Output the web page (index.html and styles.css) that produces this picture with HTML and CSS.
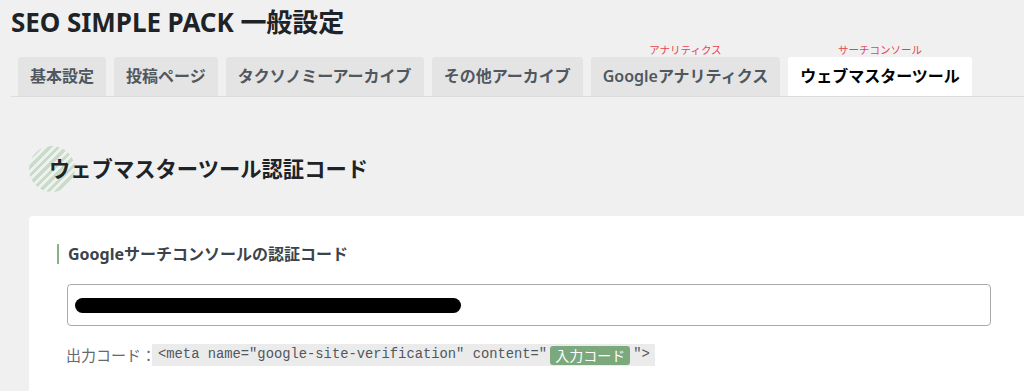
FILE: index.html
```html
<!DOCTYPE html>
<html lang="ja">
<head>
<meta charset="utf-8">
<title>SEO SIMPLE PACK 一般設定</title>
<link rel="stylesheet" href="styles.css">
</head>
<body>
<div class="wrap">
  <h1 class="page-title">SEO SIMPLE PACK 一般設定</h1>
  <nav class="tabs">
    <a class="tab">基本設定</a>
    <a class="tab">投稿ページ</a>
    <a class="tab">タクソノミーアーカイブ</a>
    <a class="tab">その他アーカイブ</a>
    <a class="tab">Googleアナリティクス<span class="tab-note">アナリティクス</span></a>
    <a class="tab tab-active">ウェブマスターツール<span class="tab-note">サーチコンソール</span></a>
  </nav>
  <section class="section">
    <h2 class="section-title">ウェブマスターツール認証コード</h2>
    <div class="card">
      <h3 class="field-label">Googleサーチコンソールの認証コード</h3>
      <div class="field-input"><span class="redact"></span></div>
      <p class="output">出力コード：<code class="code">&lt;meta name="google-site-verification" content="<span class="badge">入力コード</span>"&gt;</code></p>
    </div>
  </section>
</div>
</body>
</html>
```

FILE: styles.css
```css
html, body {
  margin: 0;
  padding: 0;
  background: #f0f0f1;
  overflow: hidden;
}
body {
  font-family: "Noto Sans", "Noto Sans CJK JP", sans-serif;
  color: #1d2327;
}
.wrap {
  padding-left: 11px;
}
.page-title {
  margin: 0;
  padding-top: 4px;
  font-size: 26px;
  line-height: 36px;
  font-weight: 700;
  color: #1d2327;
  letter-spacing: -0.05px;
}
.tabs {
  display: flex;
  gap: 8px;
  margin-top: 17px;
  padding-left: 7px;
  border-bottom: 1px solid #dcdcde;
}
.tab {
  position: relative;
  display: block;
  height: 39px;
  line-height: 39px;
  padding: 0 12px;
  background: #e4e4e4;
  border-radius: 3px 3px 0 0;
  font-family: "Noto Sans", "Noto Sans CJK JP", sans-serif;
  font-size: 16px;
  font-weight: 600;
  color: #50575e;
  white-space: nowrap;
}
.tab-active {
  background: #fff;
  color: #000;
  font-weight: 700;
}
.tab-note {
  position: absolute;
  left: 0;
  right: 0;
  top: -13px;
  text-align: center;
  font-size: 10.5px;
  line-height: 12px;
  font-weight: 400;
  color: #e9434f;
}
.section {
  padding-left: 18px;
}
.section-title {
  position: relative;
  z-index: 0;
  isolation: isolate;
  margin: 49px 0 0;
  padding-left: 20px;
  height: 46px;
  line-height: 46px;
  font-size: 21.3px;
  font-weight: 700;
  color: #1d2327;
}
.section-title::before {
  content: "";
  position: absolute;
  left: 0;
  top: 0;
  width: 46px;
  height: 46px;
  border-radius: 50%;
  background: repeating-linear-gradient(-45deg, #c9dcc9 0 3px, #eef1ee 3px 6px);
  z-index: -1;
}
.card {
  margin-top: 24px;
  background: #fff;
  border-radius: 4px 0 0 0;
  padding: 28px 0 25px 28px;
}
.field-label {
  margin: 0;
  border-left: 2px solid #86b487;
  padding-left: 9px;
  height: 20px;
  line-height: 20px;
  font-size: 16px;
  font-weight: 700;
  color: #3c434a;
}
.field-input {
  box-sizing: border-box;
  margin: 20px 0 0 10px;
  width: 924px;
  height: 42px;
  border: 1px solid #a7aaad;
  border-radius: 4px;
  display: flex;
  align-items: center;
  padding-left: 7px;
}
.redact {
  display: block;
  width: 386px;
  height: 15px;
  border-radius: 8px;
  background: #000;
}
.output {
  margin: 18px 0 0 9px;
  font-size: 15px;
  line-height: 22px;
  color: #646970;
  display: flex;
  align-items: center;
}
.code {
  display: inline-flex;
  align-items: center;
  margin-left: -4px;
  padding: 0 5px 0 6px;
  height: 22px;
  background: #ebebeb;
  font-family: "Liberation Mono", monospace;
  font-size: 13.8px;
  color: #50575e;
  white-space: pre;
}
.badge {
  display: inline-block;
  margin: 0 3px 0 3px;
  padding: 0 5px;
  height: 19px;
  line-height: 19px;
  border-radius: 3px;
  background: #7ca87d;
  color: #fff;
  font-family: "Noto Sans CJK JP", sans-serif;
  font-size: 14px;
}
```
